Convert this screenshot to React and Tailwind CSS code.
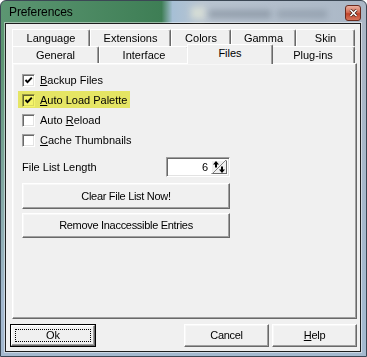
import React from 'react';

// 经典 Win 风格的 3D 边框
const raised =
  'bg-[#f0f0f0] border border-t-white border-l-white border-r-[#696969] border-b-[#696969] shadow-[inset_-1px_-1px_0_#a0a0a0,inset_1px_1px_0_#f7f7f7]';
const sunken =
  'bg-white border border-t-[#a0a0a0] border-l-[#a0a0a0] border-r-white border-b-white shadow-[inset_1px_1px_0_#696969,inset_-1px_-1px_0_#e3e3e3]';

const row1 = [
  { label: 'Language', w: 'w-[78px]' },
  { label: 'Extensions', w: 'w-[81px]' },
  { label: 'Colors', w: 'w-[60px]' },
  { label: 'Gamma', w: 'w-[65px]' },
  { label: 'Skin', w: 'w-[59px]' },
];

const Tab = ({ label, w }) => (
  <div
    className={`${w} h-[17px] flex items-center justify-center bg-[#f0f0f0] border-t border-l border-r border-t-white border-l-white border-r-[#696969] rounded-tr-[2px] shadow-[inset_-1px_0_0_#a0a0a0]`}
  >
    {label}
  </div>
);

const Check = ({ checked, children }) => (
  <div className="flex h-[20px] items-center">
    <div className={`${sunken} flex h-[13px] w-[13px] items-center justify-center`}>
      {checked && (
        <svg width="9" height="9" viewBox="0 0 9 9">
          <path d="M1.5 4 L3.5 6.2 L7.8 1.6" fill="none" stroke="#000" strokeWidth="1.9" />
        </svg>
      )}
    </div>
    <span className="ml-[5px]">{children}</span>
  </div>
);

const Button = ({ className, children }) => (
  <div className={`${raised} ${className} flex items-center justify-center tracking-[-0.3px]`}>
    {children}
  </div>
);

export default function App() {
  return (
    <div className="h-[357px] w-[367px] overflow-hidden font-['Liberation_Sans',Arial,sans-serif] text-[11px] text-black">
      <div className="relative flex h-full w-full flex-col rounded-t-[6px] border border-[#3b4754] bg-[linear-gradient(180deg,transparent_15%,#a4b9cf_85%),linear-gradient(90deg,#5c9672_0%,#3e7e55_44%,#a6bfd5_47%,#b9c4d0_55%,#aab7c6_100%)] pb-[4px] pl-[4px] pr-[5px]">
        {/* 标题栏 */}
        <div className="relative h-[22px] shrink-0">
          <div className="absolute left-[186px] top-[6px] h-[12px] w-[14px] bg-[#e3e8d8] opacity-70 blur-[3px]" />
          <div className="absolute left-[204px] top-[9px] h-[8px] w-[62px] bg-[#5d6a78] opacity-40 blur-[3px]" />
          <div className="absolute left-[272px] top-[9px] h-[8px] w-[50px] bg-[#5d6a78] opacity-30 blur-[3px]" />
          <div className="absolute left-[4px] top-[4px] text-[12px] leading-[14px] tracking-[-0.1px]">Preferences</div>
          <div className="absolute right-[0px] top-[4px] flex h-[16px] w-[16px] items-center justify-center rounded-[3px] border border-[#6b2a1d] bg-[linear-gradient(180deg,#eab0a0_0%,#d56d55_45%,#c1432a_55%,#d5735a_100%)]">
            <svg width="9" height="8" viewBox="0 0 9 8">
              <path d="M1.5 1 L7.5 7 M7.5 1 L1.5 7" stroke="#3a1a12" strokeWidth="3" />
              <path d="M1.5 1 L7.5 7 M7.5 1 L1.5 7" stroke="#fff" strokeWidth="1.6" />
            </svg>
          </div>
        </div>

        {/* 对话框主体 */}
        <div className="flex flex-1 flex-col border border-[#1e1e1e] bg-[#f0f0f0] pt-[5px] shadow-[0_0_0_1px_rgba(255,255,255,0.45)]">
          {/* 选项卡 */}
          <div className="ml-[6px] flex w-[343px]">
            {row1.map((t) => (
              <Tab key={t.label} {...t} />
            ))}
          </div>
          <div className="ml-[6px] flex h-[17px] w-[343px] items-end">
            <Tab label="General" w="w-[87px]" />
            <Tab label="Interface" w="w-[90px]" />
            <div className="relative z-10 -mx-[2px] -mb-[1px] flex h-[20px] w-[86px] items-center justify-center rounded-tr-[2px] border-l border-r border-t border-l-white border-r-[#696969] border-t-white bg-[#f0f0f0] pb-[3px] shadow-[inset_-1px_0_0_#a0a0a0]">
              Files
            </div>
            <Tab label="Plug-ins" w="w-[84px]" />
          </div>

          {/* 面板 */}
          <div className={`${raised} ml-[6px] flex h-[256px] w-[345px] shrink-0 flex-col pl-[9px] pt-[6px]`}>
            <Check checked>
              <u>B</u>ackup Files
            </Check>
            <div className="relative">
              <div className="absolute left-[-4px] top-[1px] h-[17px] w-[112px] bg-[#f4f46a] mix-blend-multiply" />
              <Check checked>
                <u>A</u>uto Load Palette
              </Check>
            </div>
            <Check>
              Auto <u>R</u>eload
            </Check>
            <Check>
              <u>C</u>ache Thumbnails
            </Check>

            <div className="mt-[7px] flex h-[20px] w-[208px] items-center justify-between">
              <span>File List Length</span>
              <div className={`${sunken} flex h-[20px] w-[64px] items-stretch p-[2px]`}>
                <div className="flex flex-1 items-center justify-end pr-[3px]">6</div>
                <div className="flex w-[16px] items-center justify-center border border-t-white border-l-white border-r-[#696969] border-b-[#696969] bg-[#f0f0f0]">
                  <svg width="14" height="14" viewBox="0 0 14 14">
                    <path d="M0 14 L14 0" stroke="#808080" strokeWidth="1" />
                    <path d="M4 1 L7 4.5 L1 4.5 Z" fill="#000" />
                    <path d="M3.5 4 L3.5 7.5 M4.5 4 L4.5 7.5" stroke="#000" strokeWidth="1" />
                    <path d="M10 13 L7 9.5 L13 9.5 Z" fill="#000" />
                    <path d="M9.5 6.5 L9.5 10 M10.5 6.5 L10.5 10" stroke="#000" strokeWidth="1" />
                  </svg>
                </div>
              </div>
            </div>

            <Button className="mt-[6px] h-[26px] w-[208px]">Clear File List Now!</Button>
            <Button className="mt-[4px] h-[25px] w-[208px]">Remove Inaccessible Entries</Button>
          </div>

          {/* 底部按钮 */}
          <div className="mt-[5px] flex h-[23px]">
            <div className="ml-[4px] flex h-[23px] w-[86px] border border-black">
              <div className={`${raised} flex flex-1 items-center justify-center p-[3px]`}>
                <div className="flex h-full w-full items-center justify-center border border-dotted border-black">
                  Ok
                </div>
              </div>
            </div>
            <Button className="ml-[88px] h-[23px] w-[85px]">Cancel</Button>
            <Button className="ml-[3px] h-[23px] w-[85px]">
              <span>
                <u>H</u>elp
              </span>
            </Button>
          </div>
        </div>
      </div>
    </div>
  );
}
